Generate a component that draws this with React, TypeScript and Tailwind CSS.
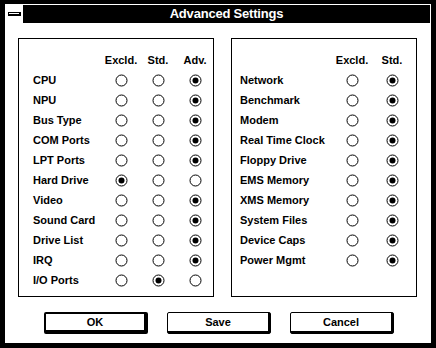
import React from "react";

const Radio = ({ on }: { on?: boolean }) => (
  <svg width="13" height="13" viewBox="0 0 13 13" className="block">
    <circle cx="6.5" cy="6.5" r="5.5" fill="white" stroke="black" strokeWidth="1" />
    {on && <circle cx="6.5" cy="6.5" r="3" fill="black" />}
  </svg>
);

const leftRows: [string, number][] = [
  ["CPU", 2],
  ["NPU", 2],
  ["Bus Type", 2],
  ["COM Ports", 2],
  ["LPT Ports", 2],
  ["Hard Drive", 0],
  ["Video", 2],
  ["Sound Card", 2],
  ["Drive List", 2],
  ["IRQ", 2],
  ["I/O Ports", 1],
];

const rightRows: [string, number][] = [
  ["Network", 1],
  ["Benchmark", 1],
  ["Modem", 1],
  ["Real Time Clock", 1],
  ["Floppy Drive", 1],
  ["EMS Memory", 1],
  ["XMS Memory", 1],
  ["System Files", 1],
  ["Device Caps", 1],
  ["Power Mgmt", 1],
];

const Button = ({ label, def }: { label: string; def?: boolean }) => (
  <div
    className={
      "w-[104px] h-[22px] bg-white border-black rounded-[2px] flex " +
      (def ? "border-2" : "border")
    }
  >
    <div className="flex-1 border-r-2 border-b-2 border-black flex items-center justify-center text-[11px] font-bold text-black">
      {label}
    </div>
  </div>
);

export default function App() {
  return (
    <div className="w-[436px] h-[348px] bg-black pt-[4px] px-[5px] pb-[5px] font-['Liberation_Sans',Arial,sans-serif]">
      <div className="bg-white h-full flex flex-col">
        <div className="flex h-[19px] pt-[1px] pr-[1px]">
          <div className="w-[18px] h-full flex items-center justify-center">
            <div className="w-[13px] h-[4px] bg-black flex items-start pl-[1px] pt-[1px]">
              <div className="w-[10px] h-[1px] bg-white" />
            </div>
          </div>
          <div className="flex-1 bg-black text-white font-bold text-[13px] flex items-center justify-center tracking-[-0.2px]">
            Advanced Settings
          </div>
        </div>

        <div className="flex gap-[17px] pl-[13px] pt-[15px]">
          <div className="w-[196px] h-[259px] border border-black pt-[11px] pl-[14px]">
            <div className="grid grid-cols-[70px_36px_38px_36px] auto-rows-[20px] items-center text-[11px] font-bold text-black">
              <div />
              <div className="text-center">Excld.</div>
              <div className="text-center">Std.</div>
              <div className="text-center">Adv.</div>
              {leftRows.map(([name, sel]) => (
                <React.Fragment key={name}>
                  <div className="whitespace-nowrap">{name}</div>
                  {[0, 1, 2].map((i) => (
                    <div key={i} className="flex justify-center">
                      <Radio on={sel === i} />
                    </div>
                  ))}
                </React.Fragment>
              ))}
            </div>
          </div>

          <div className="w-[186px] h-[259px] border border-black pt-[11px] pl-[8px]">
            <div className="grid grid-cols-[92px_40px_40px] auto-rows-[20px] items-center text-[11px] font-bold text-black">
              <div />
              <div className="text-center">Excld.</div>
              <div className="text-center">Std.</div>
              {rightRows.map(([name, sel]) => (
                <React.Fragment key={name}>
                  <div className="whitespace-nowrap">{name}</div>
                  {[0, 1].map((i) => (
                    <div key={i} className="flex justify-center">
                      <Radio on={sel === i} />
                    </div>
                  ))}
                </React.Fragment>
              ))}
            </div>
          </div>
        </div>

        <div className="flex gap-[19px] pl-[39px] pt-[15px]">
          <Button label="OK" def />
          <Button label="Save" />
          <Button label="Cancel" />
        </div>
      </div>
    </div>
  );
}
